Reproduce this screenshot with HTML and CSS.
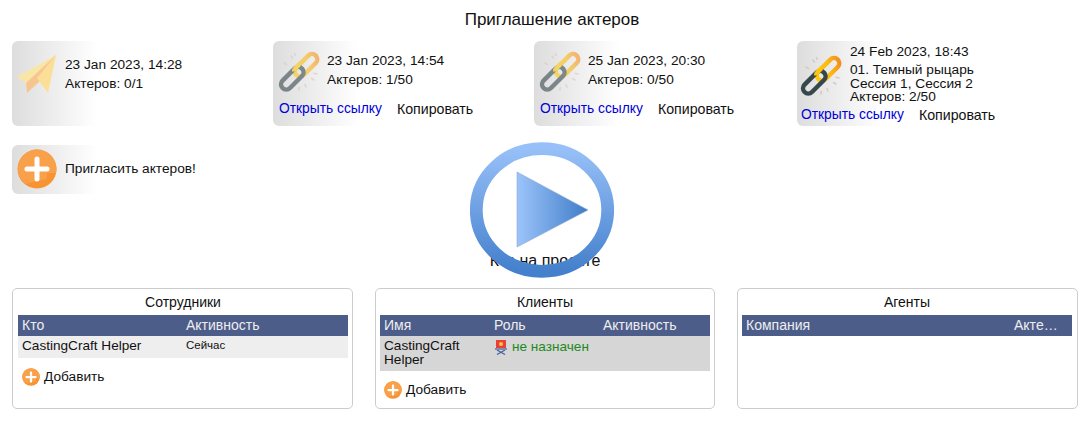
FILE: index.html
```html
<!DOCTYPE html>
<html lang="ru">
<head>
<meta charset="utf-8">
<title>Приглашение актеров</title>
<link rel="stylesheet" href="styles.css">
</head>
<body>
<svg class="defs" width="0" height="0" aria-hidden="true">
  <defs>
    <linearGradient id="gold" gradientUnits="userSpaceOnUse" x1="16" y1="8" x2="38" y2="20">
      <stop offset="0" stop-color="#fdc80c"/>
      <stop offset=".55" stop-color="#fbb914"/>
      <stop offset="1" stop-color="#f48f1e"/>
    </linearGradient>
    <symbol id="link" viewBox="-2 0 42 42">
      <g fill="none">
        <path class="rays" stroke-width="1.600" stroke-linecap="round" d="M11 5l1.500 2M4 12l2.500 1.500M34 29l-2.500-1.500M37 23l-3-.8M26 36l-1-2.500M19 39l.2-2.500M14.500 2.500l.5 1.800"/>
        <rect x="12.250" y="9.050" width="27.500" height="10.500" rx="5.250" transform="rotate(-45 26 14.300)" stroke="url(#gold)" stroke-width="4.500"/>
        <rect class="l-b" x="-1.450" y="22.050" width="27.500" height="10.500" rx="5.250" transform="rotate(-45 12.300 27.300)" stroke-width="4.500"/>
        <path d="M19.500 13.100 15.800 16.800A5.250 5.250 0 0 0 14.200 20.600" stroke="#fdc80c" stroke-width="4.500"/>
      </g>
    </symbol>
    <symbol id="plus" viewBox="0 0 40 40">
      <circle cx="20" cy="20" r="19.500" fill="#f79332"/>
      <path d="M20 .5A19.500 19.500 0 0 1 39 24L30 24V30L8 35A19.500 19.500 0 0 1 20 .5z" fill="#f9a14a"/>
      <path d="M20 10v20M10 20h20" stroke="#fff" stroke-width="5" stroke-linecap="round" fill="none"/>
    </symbol>
  </defs>
</svg>

<main class="page">
  <h1 class="heading">Приглашение актеров</h1>

  <section class="cards">
    <article class="card card-short">
      <svg class="card-icon plane" viewBox="0 0 40 40">
        <path d="M39 0 0 22l9 6z" fill="#fae6a4"/>
        <path d="M39 0 9 28l1 10 12-11z" fill="#f7c690"/>
        <path d="M39 0 20 23l11 15z" fill="#fbdf96"/>
      </svg>
      <div class="card-text">
        <p>23 Jan 2023, 14:28</p>
        <p>Актеров: 0/1</p>
      </div>
    </article>

    <article class="card card-link">
      <div class="card-main">
        <svg class="link-icon faded"><use href="#link"/></svg>
        <div class="card-text">
          <p>23 Jan 2023, 14:54</p>
          <p>Актеров: 1/50</p>
        </div>
      </div>
      <div class="card-actions"><a href="#">Открыть ссылку</a><span>Копировать</span></div>
    </article>

    <article class="card card-link">
      <div class="card-main">
        <svg class="link-icon faded"><use href="#link"/></svg>
        <div class="card-text">
          <p>25 Jan 2023, 20:30</p>
          <p>Актеров: 0/50</p>
        </div>
      </div>
      <div class="card-actions"><a href="#">Открыть ссылку</a><span>Копировать</span></div>
    </article>

    <article class="card card-dense">
      <div class="card-main">
        <svg class="link-icon"><use href="#link"/></svg>
        <div class="card-text">
          <p class="date-dense">24 Feb 2023, 18:43</p>
          <p class="tight">01. Темный рыцарь</p>
          <p class="tight">Сессия 1, Сессия 2</p>
          <p class="tight">Актеров: 2/50</p>
        </div>
      </div>
      <div class="card-actions"><a href="#">Открыть ссылку</a><span>Копировать</span></div>
    </article>
  </section>

  <div class="invite">
    <svg class="card-icon"><use href="#plus"/></svg>
    <span>Пригласить актеров!</span>
  </div>

  <h2 class="team-title">Кто на проекте</h2>

  <section class="panels">
    <div class="panel panel-staff">
      <h3>Сотрудники</h3>
      <table class="cols-staff">
        <thead><tr><th>Кто</th><th>Активность</th></tr></thead>
        <tbody><tr class="row-light"><td>CastingCraft Helper</td><td class="small">Сейчас</td></tr></tbody>
      </table>
      <div class="add"><svg class="add-icon"><use href="#plus"/></svg>Добавить</div>
    </div>

    <div class="panel">
      <h3>Клиенты</h3>
      <table class="cols-clients">
        <thead><tr><th>Имя</th><th>Роль</th><th>Активность</th></tr></thead>
        <tbody><tr class="row-dark">
          <td>CastingCraft Helper</td>
          <td class="role">
            <svg class="chair" viewBox="0 0 14 16">
              <path d="M3 11l8 4.500M11 11l-8 4.500" stroke="#44609c" stroke-width="1.200" fill="none"/>
              <rect x="1" y="9" width="12" height="2" fill="#7f8db0"/>
              <rect x="2" y="1" width="10" height="8" fill="#e8413c"/>
              <circle cx="7" cy="5" r="2" fill="#f7c33c"/>
            </svg>не назначен
          </td>
          <td></td>
        </tr></tbody>
      </table>
      <div class="add"><svg class="add-icon"><use href="#plus"/></svg>Добавить</div>
    </div>

    <div class="panel panel-agents">
      <h3>Агенты</h3>
      <table class="cols-agents">
        <thead><tr><th>Компания</th><th>Акте…</th></tr></thead>
      </table>
    </div>
  </section>

  <svg class="play" viewBox="0 0 144 136" aria-hidden="true">
    <defs>
      <linearGradient id="ring" x1="0" y1="0" x2="0" y2="1">
        <stop offset="0" stop-color="#97c0f8"/>
        <stop offset="1" stop-color="#4480cc"/>
      </linearGradient>
      <linearGradient id="tri" x1="0" y1="0" x2="1" y2="0">
        <stop offset="0" stop-color="#9cc4fa"/>
        <stop offset="1" stop-color="#3f7cc8"/>
      </linearGradient>
    </defs>
    <ellipse class="play-ring" cx="72" cy="68" rx="65.700" ry="61.300" stroke="url(#ring)" stroke-width="12.800"/>
    <path d="M47 30 118 68 47 105z" fill="url(#tri)" stroke="#8aa8d0" stroke-width=".6"/>
  </svg>
</main>
</body>
</html>
```
FILE: styles.css
```css
* { box-sizing: border-box; }
html, body { margin: 0; padding: 0; background: #fff; }
body {
  font-family: "Liberation Sans", Arial, sans-serif;
  font-size: 13.700px;
  color: #111;
  width: 1090px;
  height: 426px;
  overflow: hidden;
}
.defs { position: absolute; }
.page { position: relative; padding: 12px 12px 0; height: 426px; }
p, h1, h2, h3 { margin: 0; font-weight: 400; }
.heading { font-size: 17px; line-height: 16px; text-align: center; margin-left: 14px; }

.cards {
  display: grid;
  grid-template-columns: repeat(4, 239px);
  column-gap: 22px;
  margin-top: 13px;
}
.card {
  height: 85px;
  border-radius: 6px;
  background: linear-gradient(to right, #ddd, #fff 85px);
  padding-left: 5px;
}
.card-short { display: flex; padding-top: 14px; gap: 8px; }
.card-link { padding-top: 10px; }
.card-dense { padding-top: 3px; padding-left: 3px; margin-left: 2px; }
.card-main { display: flex; gap: 7px; height: 50px; }
.card-dense .card-main { align-items: center; gap: 8px; height: 63px; }
.card-icon { width: 40px; height: 40px; flex: none; display: block; }
.link-icon { width: 42px; height: 42px; flex: none; display: block; }
.faded { opacity: .6; }
.card-text p { line-height: 19px; }
.card-dense .card-text { align-self: flex-start; }
.card-text .date-dense { line-height: 16px; margin-bottom: 3px; }
.card-text .tight { line-height: 13.500px; }
.card-actions { display: flex; gap: 15px; line-height: 16px; padding-left: 1px; }
.card-actions a { color: #0000d8; text-decoration: none; font-size: 13.800px; }
.card-actions span { font-size: 14.200px; }
.l-b { stroke: #37484d; }
.rays { stroke: #dcc8c4; }

.invite {
  display: flex;
  align-items: center;
  gap: 8px;
  height: 49px;
  width: 239px;
  margin-top: 19px;
  padding: 0 0 2px 5px;
  border-radius: 6px;
  background: linear-gradient(to right, #ddd, #fff 85px);
}

.team-title { font-size: 16px; line-height: 16px; text-align: center; margin-top: 59px; }

.panels {
  display: grid;
  grid-template-columns: 341px 340px 341px;
  column-gap: 22px;
  margin-top: 19px;
}
.panel {
  height: 121px;
  border: 1px solid #ccc;
  border-radius: 5px;
  padding: 0 4px;
}
.panel-staff { padding-left: 5px; }
.panel-agents { padding-right: 5px; }
.panel h3 { font-size: 14px; line-height: 26px; text-align: center; }
table { width: 100%; table-layout: fixed; border-collapse: collapse; }
th {
  background: #4d5d8a;
  color: #eee;
  font-weight: 400;
  font-size: 14px;
  text-align: left;
  height: 21px;
  padding: 0 4px 1px;
  white-space: nowrap;
  overflow: hidden;
}
td { padding: 3px 4px; vertical-align: top; line-height: 13.500px; font-size: 13.600px; }
.row-light td { background: #eee; height: 22px; }
.row-dark td { background: #d6d6d6; height: 35px; }
.small { font-size: 11.500px; }
.cols-staff th:first-child { width: 164px; }
.cols-clients th:first-child { width: 110px; }
.cols-clients th:nth-child(2) { width: 109px; }
.cols-agents th:last-child { width: 62px; }
.role { color: #1d8a1d; white-space: nowrap; }
.chair { width: 14px; height: 16px; margin-right: 4px; vertical-align: -4px; }
.add { display: flex; align-items: center; gap: 4px; margin: 10px 0 0 4px; line-height: 18px; }
.add-icon { width: 18px; height: 18px; }

.play { position: absolute; left: 470px; top: 142px; width: 144px; height: 136px; }
.play-ring { fill: none; }
```
